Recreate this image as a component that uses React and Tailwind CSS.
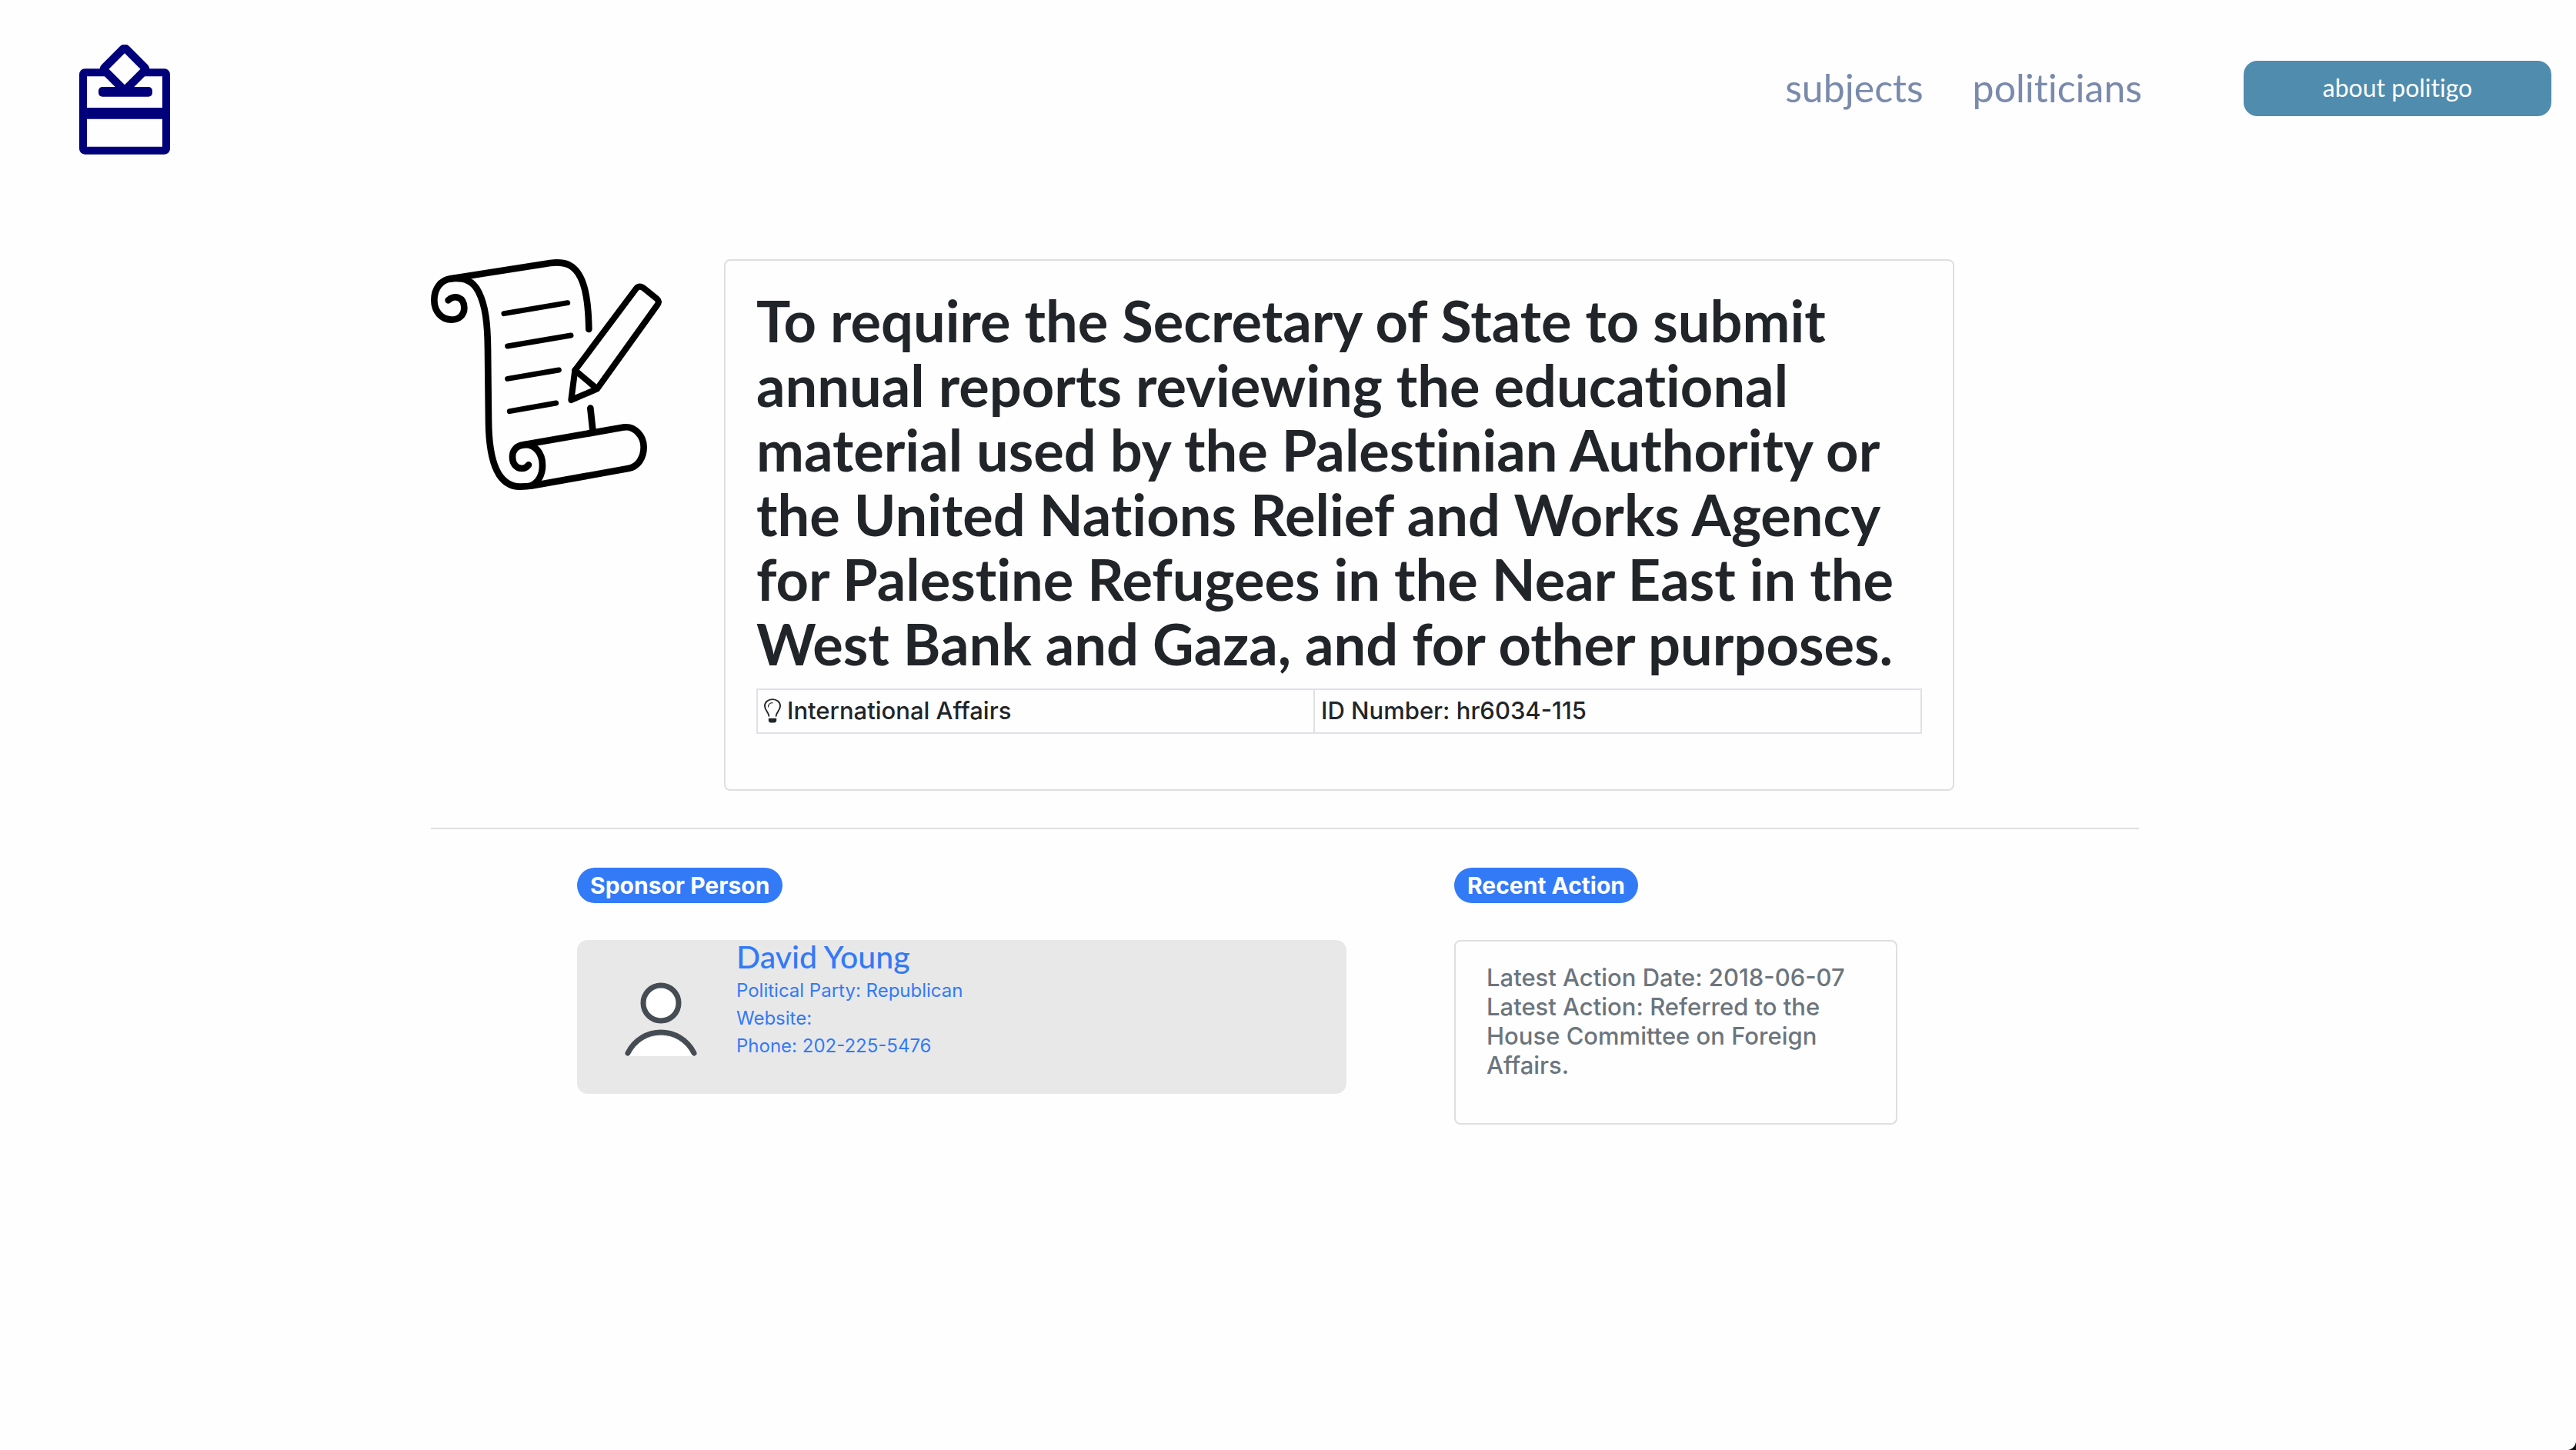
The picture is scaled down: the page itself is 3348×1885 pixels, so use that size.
const lato = "font-['Lato',sans-serif] [font-variant-ligatures:none]";

function BallotLogo() {
  return (
    <svg viewBox="69 55 354 429" className="block h-[143px] w-[118px]" fill="none" stroke="#00007b" aria-hidden="true">
      <path d="M175 164H91q-7 0-7 7V461q0 7 7 7H401q7 0 7-7V171q0-7-7-7H318" strokeWidth="30" />
      <path d="M84 323H408" strokeWidth="44" />
      <path d="M239 73q7-6 14 0L324 144q5 6 0 12L246 234 168 156q-5-6 0-12Z" strokeWidth="32" strokeLinejoin="round" />
      <rect x="144" y="220" width="210" height="38" rx="15" fill="#00007b" stroke="none" />
    </svg>
  );
}

function ScrollIcon() {
  return (
    <svg viewBox="60 51 900 900" className="block size-[300px] shrink-0" fill="none" stroke="#000" strokeWidth="26" strokeLinecap="round" strokeLinejoin="round" aria-hidden="true">
      <path d="M128 211C150 188 190 198 190 241C190 270 168 287 141 287C102 287 73 255 73 211C73 166 98 132 137 127L525 66C550 63 580 65 598 73C658 102 674 200 676 324" />
      <path d="M137 127C190 122 224 134 246 178C273 232 281 300 282 400L285 680C286 850 325 938 408 938C425 938 440 937 458 934L830 867C868 860 890 825 890 784C890 740 855 702 815 706L420 775C393 778 378 798 378 822C378 850 394 867 415 867C427 867 434 862 441 853" />
      <path d="M420 775C465 770 495 805 495 855C495 890 480 920 452 934" />
      <path d="M682 632 691 716" />
      <g strokeWidth="21">
        <path d="M345 263 593 221M359 390 606 348M359 517 559 483M367 644 548 612" />
      </g>
      <g strokeWidth="24">
        <path d="M622 484 860 166Q872 152 889 163L941 205Q953 215 943 229L708 557 607 600Z" />
        <path d="M622 484 704 553" />
      </g>
    </svg>
  );
}

function BulbIcon() {
  return (
    <svg viewBox="37 50 68 98" className="block h-8 w-[22px] shrink-0" fill="none" stroke="#212529" strokeWidth="6" aria-hidden="true">
      <path d="M57 122C56 104 40 98 40 80C40 64 54 53 71 53S102 64 102 80C102 98 86 104 85 122" />
      <path d="M54 83C54 74 61 67 71 67" strokeWidth="4" strokeLinecap="round" />
      <path d="M55 129H87V137Q86 147 78 147H64Q56 147 55 137Z" fill="#212529" stroke="none" />
    </svg>
  );
}

function PersonIcon() {
  return (
    <svg viewBox="0 0 96 98" className="block h-[98px] w-24 shrink-0" aria-hidden="true" stroke="#464c54" strokeWidth="7" strokeLinecap="round">
      <path d="M4 97C22 62 74 62 92 97Z" fill="#fff" stroke="none" />
      <circle cx="48" cy="28" r="23" fill="#fff" />
      <path d="M5 93C23 57 73 57 91 93" fill="none" />
    </svg>
  );
}

function Pill({ children }) {
  return (
    <h2 className="w-fit rounded-full bg-[#337af7] px-[17px] text-[30px] leading-[46px] font-bold text-white">
      {children}
    </h2>
  );
}

const titleLines = [
  "To require the Secretary of State to submit",
  "annual reports reviewing the educational",
  "material used by the Palestinian Authority or",
  "the United Nations Relief and Works Agency",
  "for Palestine Refugees in the Near East in the",
  "West Bank and Gaza, and for other purposes.",
];

export default function App() {
  return (
    <div className="relative min-h-screen bg-[#fefefe] font-['Inter',sans-serif] text-[#212529]">
      <header className="flex items-start pt-[58px] pr-8 pl-[103px]">
        <a href="#home" aria-label="politigo home">
          <BallotLogo />
        </a>
        <nav className={`${lato} ml-auto flex items-start gap-16 text-[50px] leading-[112px] text-[#7a8aac]`}>
          <a href="#subjects">subjects</a>
          <a href="#politicians">politicians</a>
        </nav>
        <button type="button" className={`${lato} mt-[21px] ml-[132px] h-[72px] w-[400px] rounded-[18px] bg-[#4f8cae] pb-[2px] text-[32px] leading-[70px] text-white`}>
          about politigo
        </button>
      </header>

      <div className="mt-[136px] pr-2">
        <main className="mx-auto w-[2220px] max-w-full">
          <section className="flex items-start gap-[81px] border-b-2 border-[#dfdfdf] pb-12">
            <ScrollIcon />
            <article className="w-[1599px] rounded-lg border-2 border-[#dfdfdf] px-10 pt-9 pb-[72px]">
              <h1 className={`${lato} text-[74px] leading-[84px] font-bold whitespace-nowrap`}>
                {titleLines.map((line) => (
                  <span key={line} className="block">{line}</span>
                ))}
              </h1>
              <table className="mt-4 w-full table-fixed border-collapse text-[31px] leading-[38px] font-medium">
                <tbody>
                  <tr>
                    <td className="w-[724px] border-2 border-[#dee2e6] px-2 pt-2 pb-[9px]">
                      <span className="flex items-center gap-2"><BulbIcon />International Affairs</span>
                    </td>
                    <td className="border-2 border-[#dee2e6] px-2 pt-2 pb-[9px]">ID Number: hr6034-115</td>
                  </tr>
                </tbody>
              </table>
            </article>
          </section>

          <div className="mt-[50px] flex items-start gap-[140px] pl-[190px]">
            <section className="w-[1000px]">
              <Pill>Sponsor Person</Pill>
              <a href="#david-young" className="mt-12 flex h-[200px] rounded-[14px] bg-[#e8e8e8] pl-[61px] text-[#337af7]">
                <div className="pt-[54px]"><PersonIcon /></div>
                <div className="ml-[50px]">
                  <h3 className={`${lato} text-[41px] leading-[44px] pb-1 font-medium`}>David Young</h3>
                  <p className="text-2xl leading-9">Political Party: Republican</p>
                  <p className="text-2xl leading-9">Website:</p>
                  <p className="text-2xl leading-9">Phone: 202-225-5476</p>
                </div>
              </a>
            </section>
            <section className="w-[576px]">
              <Pill>Recent Action</Pill>
              <div className="mt-12 h-60 rounded-lg border-2 border-[#dfdfdf] px-10 py-7 text-[31px] leading-[38px] font-medium text-[#6c757d]">
                <p>Latest Action Date: 2018-06-07</p>
                <p>Latest Action: Referred to the House Committee on Foreign Affairs.</p>
              </div>
            </section>
          </div>
        </main>
      </div>

      <svg viewBox="0 0 10 10" className="absolute right-0 bottom-0 size-[10px]" aria-hidden="true">
        <path d="M10 0V10H0Q8 8 10 0Z" fill="#111" />
      </svg>
    </div>
  );
}
